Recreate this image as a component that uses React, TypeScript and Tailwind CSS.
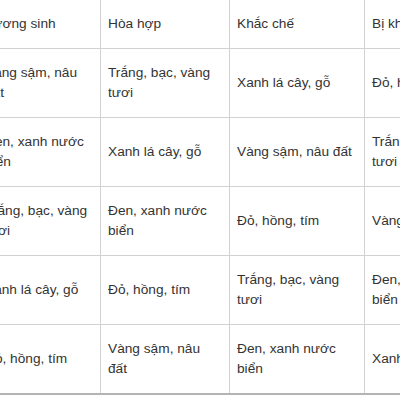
const HEADERS = ["Tương sinh", "Hòa hợp", "Khắc chế", "Bị khắc chế"];
const WIDTHS = ["w-[123px]", "w-[129px]", "w-[135px]", "w-[140px]"];

const ROWS: string[][] = [
  ["Vàng sậm, nâu đất", "Trắng, bạc, vàng tươi", "Xanh lá cây, gỗ", "Đỏ, hồng, tím"],
  ["Đen, xanh nước biển", "Xanh lá cây, gỗ", "Vàng sậm, nâu đất", "Trắng, bạc, vàng tươi"],
  ["Trắng, bạc, vàng tươi", "Đen, xanh nước biển", "Đỏ, hồng, tím", "Vàng sậm, nâu đất"],
  ["Xanh lá cây, gỗ", "Đỏ, hồng, tím", "Trắng, bạc, vàng tươi", "Đen, xanh nước biển"],
  ["Đỏ, hồng, tím", "Vàng sậm, nâu đất", "Đen, xanh nước biển", "Xanh lá cây, gỗ"],
];

export default function App() {
  return (
    <div className="h-[400px] w-[400px] overflow-hidden bg-white">
      <table
        className="ml-[-23px] mt-[-1px] w-[527px] min-w-[527px] table-fixed border-collapse text-left text-[13.7px] leading-[20px] text-[#333]"
        style={{ fontFamily: '"Liberation Sans", Arial, sans-serif' }}
      >
        <thead>
          <tr>
            {HEADERS.map((h, j) => (
              <th
                key={h}
                className={`${WIDTHS[j]} border border-[#d2d2d2] px-[7px] py-[14px] align-middle font-normal`}
              >
                {h}
              </th>
            ))}
          </tr>
        </thead>
        <tbody>
          {ROWS.map((row, i) => (
            <tr
              key={i}
              className={i === ROWS.length - 1 ? "border-b-2 border-b-[#b4b4b4]" : ""}
            >
              {row.map((cell, j) => (
                <td
                  key={j}
                  className="border border-[#d2d2d2] px-[7px] py-[14px] align-middle"
                >
                  {cell}
                </td>
              ))}
            </tr>
          ))}
        </tbody>
      </table>
    </div>
  );
}
